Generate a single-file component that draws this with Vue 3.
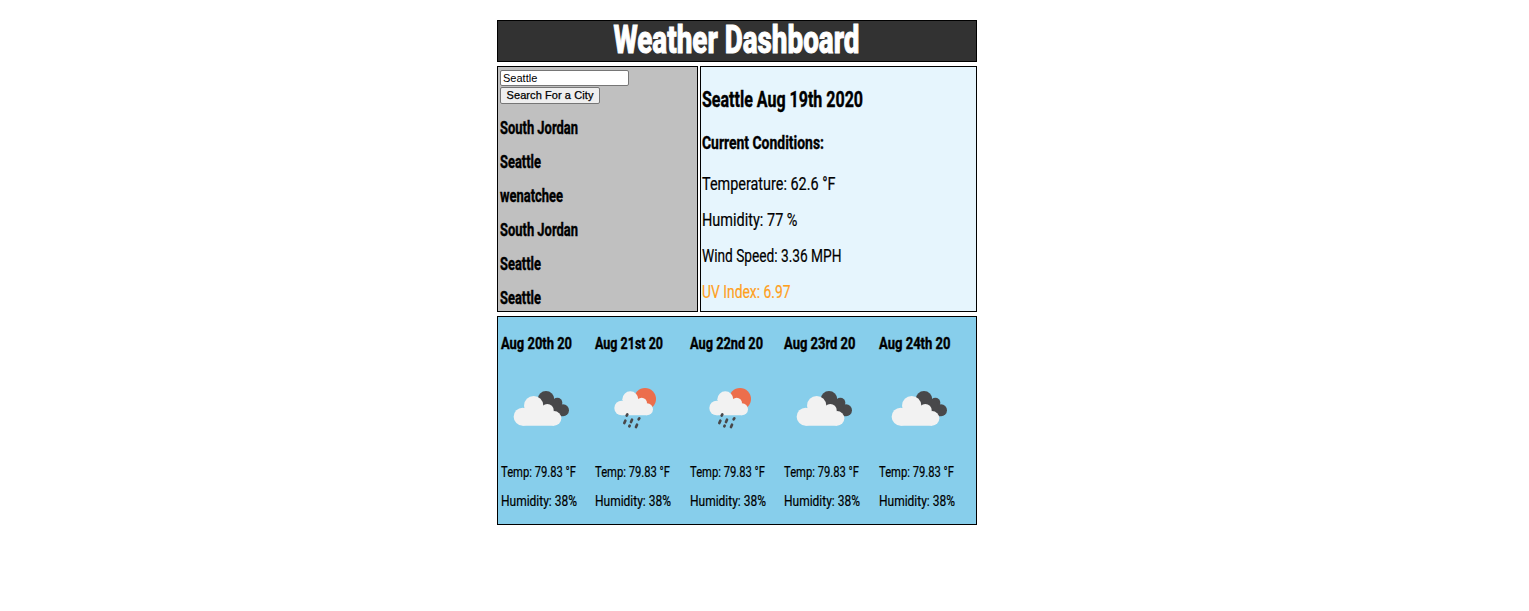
<script setup>
const conditions = [
  { text: 'Temperature: 62.6 °F', w: 133.5 },
  { text: 'Humidity: 77 %', w: 95.5 },
  { text: 'Wind Speed: 3.36 MPH', w: 139.5 },
  { text: 'UV Index: 6.97', w: 88.5, warn: true }
]
const cities = [
  { name: 'South Jordan', w: 78 },
  { name: 'Seattle', w: 41 },
  { name: 'wenatchee', w: 63 },
  { name: 'South Jordan', w: 78 },
  { name: 'Seattle', w: 41 },
  { name: 'Seattle', w: 41 }
]
const days = [
  { date: 'Aug 20th 20', w: 71, icon: 'cloud' },
  { date: 'Aug 21st 20', w: 68, icon: 'rain' },
  { date: 'Aug 22nd 20', w: 73, icon: 'rain' },
  { date: 'Aug 23rd 20', w: 71.5, icon: 'cloud' },
  { date: 'Aug 24th 20', w: 71.5, icon: 'cloud' }
]
// Condenses a label horizontally to the given width.
const vFit = {
  mounted(el, { value }) {
    el.style.transform = `scaleX(${value / el.getBoundingClientRect().width})`
  }
}
</script>

<template>
  <main class="dashboard">
    <header class="title"><h1 v-fit="246">Weather Dashboard</h1></header>
    <div class="middle">
      <aside class="search">
        <input class="field" type="text" value="Seattle" />
        <button class="go">Search For a City</button>
        <ul class="cities">
          <li v-for="(c, i) in cities" :key="i"><span v-fit="c.w" class="fit">{{ c.name }}</span></li>
        </ul>
      </aside>
      <section class="current">
        <h2><span v-fit="161" class="fit">Seattle Aug 19th 2020</span></h2>
        <h3><span v-fit="122" class="fit">Current Conditions:</span></h3>
        <p v-for="c in conditions" :key="c.text" :class="{ warn: c.warn }">
          <span v-fit="c.w" class="fit">{{ c.text }}</span>
        </p>
      </section>
    </div>
    <section class="forecast">
      <article v-for="d in days" :key="d.date" class="day">
        <h4><span v-fit="d.w" class="fit">{{ d.date }}</span></h4>
        <svg v-if="d.icon === 'cloud'" class="icon" viewBox="0 0 225 165">
          <g fill="#48484a">
            <circle cx="123" cy="58" r="25" /><circle cx="157" cy="68" r="15" /><circle cx="174" cy="91" r="18" />
            <path d="M110 60h50l12 49h-30z" />
          </g>
          <g fill="#f2f2f2">
            <circle cx="86" cy="77" r="29" /><circle cx="53" cy="110" r="27" /><circle cx="127" cy="91" r="19" />
            <circle cx="147" cy="115" r="22" /><path d="M53 85h60l34 20v32H53z" />
          </g>
        </svg>
        <svg v-else class="icon rain" viewBox="0 0 225 165">
          <circle cx="135" cy="57" r="33" fill="#ec6e4c" />
          <g fill="#f2f2f2">
            <circle cx="91" cy="58" r="24" /><circle cx="65" cy="84" r="22" /><circle cx="125" cy="69" r="16" />
            <circle cx="141" cy="88" r="18" /><path d="M65 64h45l31 20v22H65z" />
          </g>
          <path d="M82 103l-2 4M76 122l-3 7M96 119l-3 7M118 115l-2 3M89 137l-1 2M111 134l-3 7" fill="none" stroke="#48484a" stroke-width="8" stroke-linecap="round" />
        </svg>
        <p><span v-fit="75" class="fit">Temp: 79.83 °F</span></p>
        <p><span v-fit="76" class="fit">Humidity: 38%</span></p>
      </article>
    </section>
  </main>
</template>

<style>
body { background: #fff; }
</style>

<style scoped>
* { box-sizing: border-box; }
h1, h2, h3, h4, p, ul { margin: 0; padding: 0; }
.dashboard {
  width: 480px;
  margin-left: 497px;
  padding-top: 20px;
  display: flex;
  flex-direction: column;
  gap: 4px;
  font-family: Roboto, "Liberation Sans", sans-serif;
  color: #000;
  white-space: nowrap;
}
.title {
  height: 42px;
  border: 1px solid #000;
  background: #323232;
  color: #fff;
  display: flex;
  justify-content: center;
  padding-right: 1px;
}
h1 { font-size: 39px; line-height: 39px; font-weight: 800; flex: none; -webkit-text-stroke: 1px currentColor; }
.middle { height: 246px; display: grid; grid-template-columns: 201px 277px; grid-template-rows: 246px; gap: 2px; }
.search { border: 1px solid #000; background: #c0c0c0; padding: 3px 2px 0; }
.field {
  display: block;
  width: 129px;
  height: 16px;
  margin: 0;
  padding: 1px 2px;
  border: 1px solid #767676;
  border-radius: 2px;
  background: #fff;
  font: 11px "Liberation Sans", sans-serif;
  color: #000;
}
.go {
  display: block;
  width: 100px;
  height: 17px;
  margin: 1px 0 0;
  padding: 0;
  border: 1px solid #767676;
  border-radius: 2px;
  background: #efefef;
  font: 11px/15px "Liberation Sans", sans-serif;
  letter-spacing: 0.08px;
  -webkit-text-stroke: 0.25px #000;
  color: #000;
}
.cities { list-style: none; margin: 7px 0 0 -0.5px; font-size: 17.5px; line-height: 34px; font-weight: 700; }
.cities li { height: 34px; }
.fit { display: inline-block; transform-origin: 0 50%; }
h2 .fit, h3 .fit, h4 .fit, .cities .fit { -webkit-text-stroke: 0.4px currentColor; }
p .fit { -webkit-text-stroke: 0.2px currentColor; }
.current { border: 1px solid #000; background: #e6f5fd; padding: 11px 1px 0; }
h2 { font-size: 22px; line-height: 44px; height: 44px; font-weight: 700; }
h3 { font-size: 18px; line-height: 42px; height: 41px; font-weight: 700; }
.current p { font-size: 18px; line-height: 36px; height: 36px; }
.current p:first-of-type { margin-top: 3px; }
.current .warn { color: #ffa01c; }
.forecast {
  height: 209px;
  border: 1px solid #000;
  background: #87ceeb;
  padding: 11px 0 0 2.5px;
  display: grid;
  grid-template-columns: repeat(5, 94.5px);
  align-content: start;
}
h4 { font-size: 17px; line-height: 30px; height: 30px; font-weight: 700; }
.icon { display: block; width: 75px; height: 55px; margin: 22px 0 23px 4px; }
.rain { margin-left: 5px; }
.day p { font-size: 15px; line-height: 29px; height: 29px; }
</style>
